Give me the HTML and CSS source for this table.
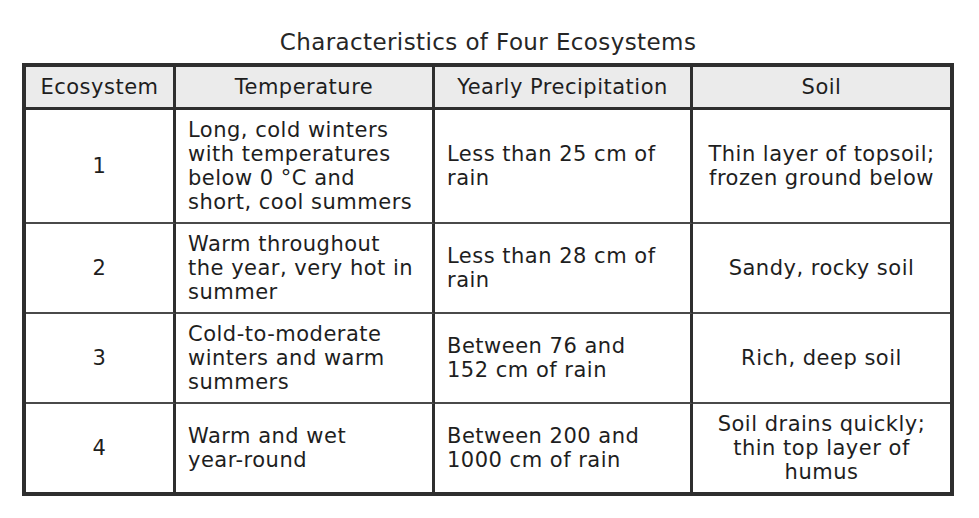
FILE: index.html
```html
<!DOCTYPE html>
<html lang="en">
<head>
<meta charset="utf-8">
<title>Characteristics of Four Ecosystems</title>
<link rel="stylesheet" href="styles.css">
</head>
<body>
<div class="page">
  <h1 class="title">Characteristics of Four Ecosystems</h1>
  <table class="eco">
    <thead>
      <tr>
        <th class="c1">Ecosystem</th>
        <th class="c2">Temperature</th>
        <th class="c3">Yearly Precipitation</th>
        <th class="c4">Soil</th>
      </tr>
    </thead>
    <tbody>
      <tr>
        <td class="num">1</td>
        <td class="txt">Long, cold winters<br>with temperatures<br>below 0 °C and<br>short, cool summers</td>
        <td class="txt">Less than 25 cm of<br>rain</td>
        <td class="ctr">Thin layer of topsoil;<br>frozen ground below</td>
      </tr>
      <tr>
        <td class="num">2</td>
        <td class="txt">Warm throughout<br>the year, very hot in<br>summer</td>
        <td class="txt">Less than 28 cm of<br>rain</td>
        <td class="ctr">Sandy, rocky soil</td>
      </tr>
      <tr>
        <td class="num">3</td>
        <td class="txt">Cold-to-moderate<br>winters and warm<br>summers</td>
        <td class="txt">Between 76 and<br>152 cm of rain</td>
        <td class="ctr">Rich, deep soil</td>
      </tr>
      <tr>
        <td class="num">4</td>
        <td class="txt">Warm and wet<br>year-round</td>
        <td class="txt">Between 200 and<br>1000 cm of rain</td>
        <td class="ctr">Soil drains quickly;<br>thin top layer of<br>humus</td>
      </tr>
    </tbody>
  </table>
</div>
</body>
</html>
```

FILE: styles.css
```css
html, body {
  margin: 0;
  padding: 0;
  background: #ffffff;
}

.page {
  padding: 28px 0 0 22px;
  font-family: "DejaVu Sans", Verdana, sans-serif;
  color: #1e1e1e;
}

.title {
  width: 932px;
  margin: 0 0 7px 0;
  font-size: 23px;
  line-height: 28px;
  font-weight: normal;
  letter-spacing: 0.4px;
  text-align: center;
  color: #262626;
}

.eco {
  width: 932px;
  table-layout: fixed;
  border-collapse: separate;
  border-spacing: 0;
  border: 4px solid #2e2e2e;
  font-size: 21px;
  line-height: 24px;
  letter-spacing: 0.5px;
}

.eco th,
.eco td {
  box-sizing: border-box;
  padding: 8px 12px;
  vertical-align: middle;
  border-right: 3px solid #2e2e2e;
  border-bottom: 2px solid #4a4a4a;
}

.eco th:last-child,
.eco td:last-child {
  border-right: none;
}

.eco tbody tr:last-child td {
  border-bottom: none;
}

.eco th {
  background: #ebebeb;
  font-weight: normal;
  text-align: center;
  border-bottom: 3px solid #2e2e2e;
  color: #1e1e1e;
}

.c1 { width: 150px; }
.c2 { width: 259px; }
.c3 { width: 258px; }
.c4 { width: 257px; }

.num {
  text-align: center;
}

.txt {
  text-align: left;
  padding-left: 13px;
}

.ctr {
  text-align: center;
}
```
